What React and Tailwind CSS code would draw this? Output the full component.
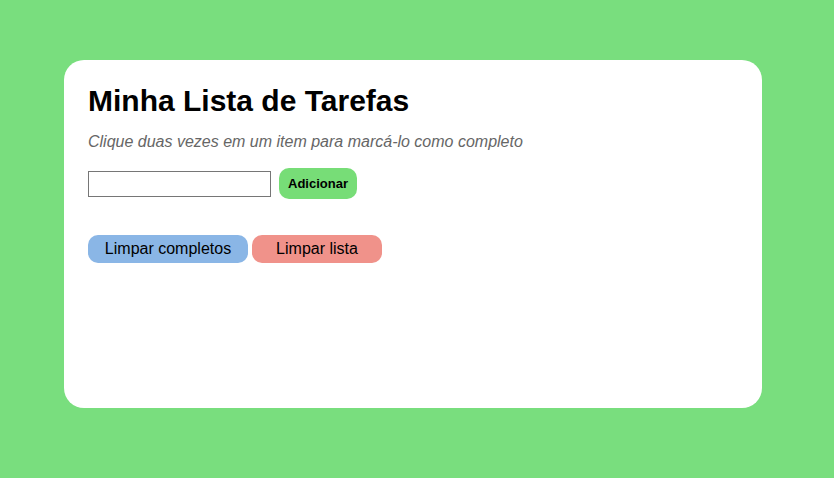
export default function App() {
  return (
    <div className="w-[834px] h-[478px] bg-[#79de7e] pt-[60px] pl-[64px]" style={{ fontFamily: '"Liberation Sans", Arial, sans-serif' }}>
      <div className="w-[698px] h-[348px] bg-white rounded-[20px] px-6 pt-[24px] flex flex-col">
        <h1 className="text-[30px] leading-[34px] font-bold text-black">Minha Lista de Tarefas</h1>
        <p className="mt-[15px] text-[16px] leading-[18px] italic text-[#666666]">Clique duas vezes em um item para marcá-lo como completo</p>
        <div className="mt-[17px] flex items-center gap-2">
          <input type="text" className="w-[183px] h-[26px] border border-[#767676] outline-none" />
          <button className="h-[31px] px-[9px] rounded-[10px] bg-[#77dd77] text-[13px] font-bold text-black">Adicionar</button>
        </div>
        <div className="mt-[36px] flex gap-1">
          <button className="w-[160px] h-[28px] rounded-[10px] bg-[#8ab6e6] text-[16px] text-black">Limpar completos</button>
          <button className="w-[130px] h-[28px] rounded-[10px] bg-[#f0928a] text-[16px] text-black">Limpar lista</button>
        </div>
      </div>
    </div>
  );
}
